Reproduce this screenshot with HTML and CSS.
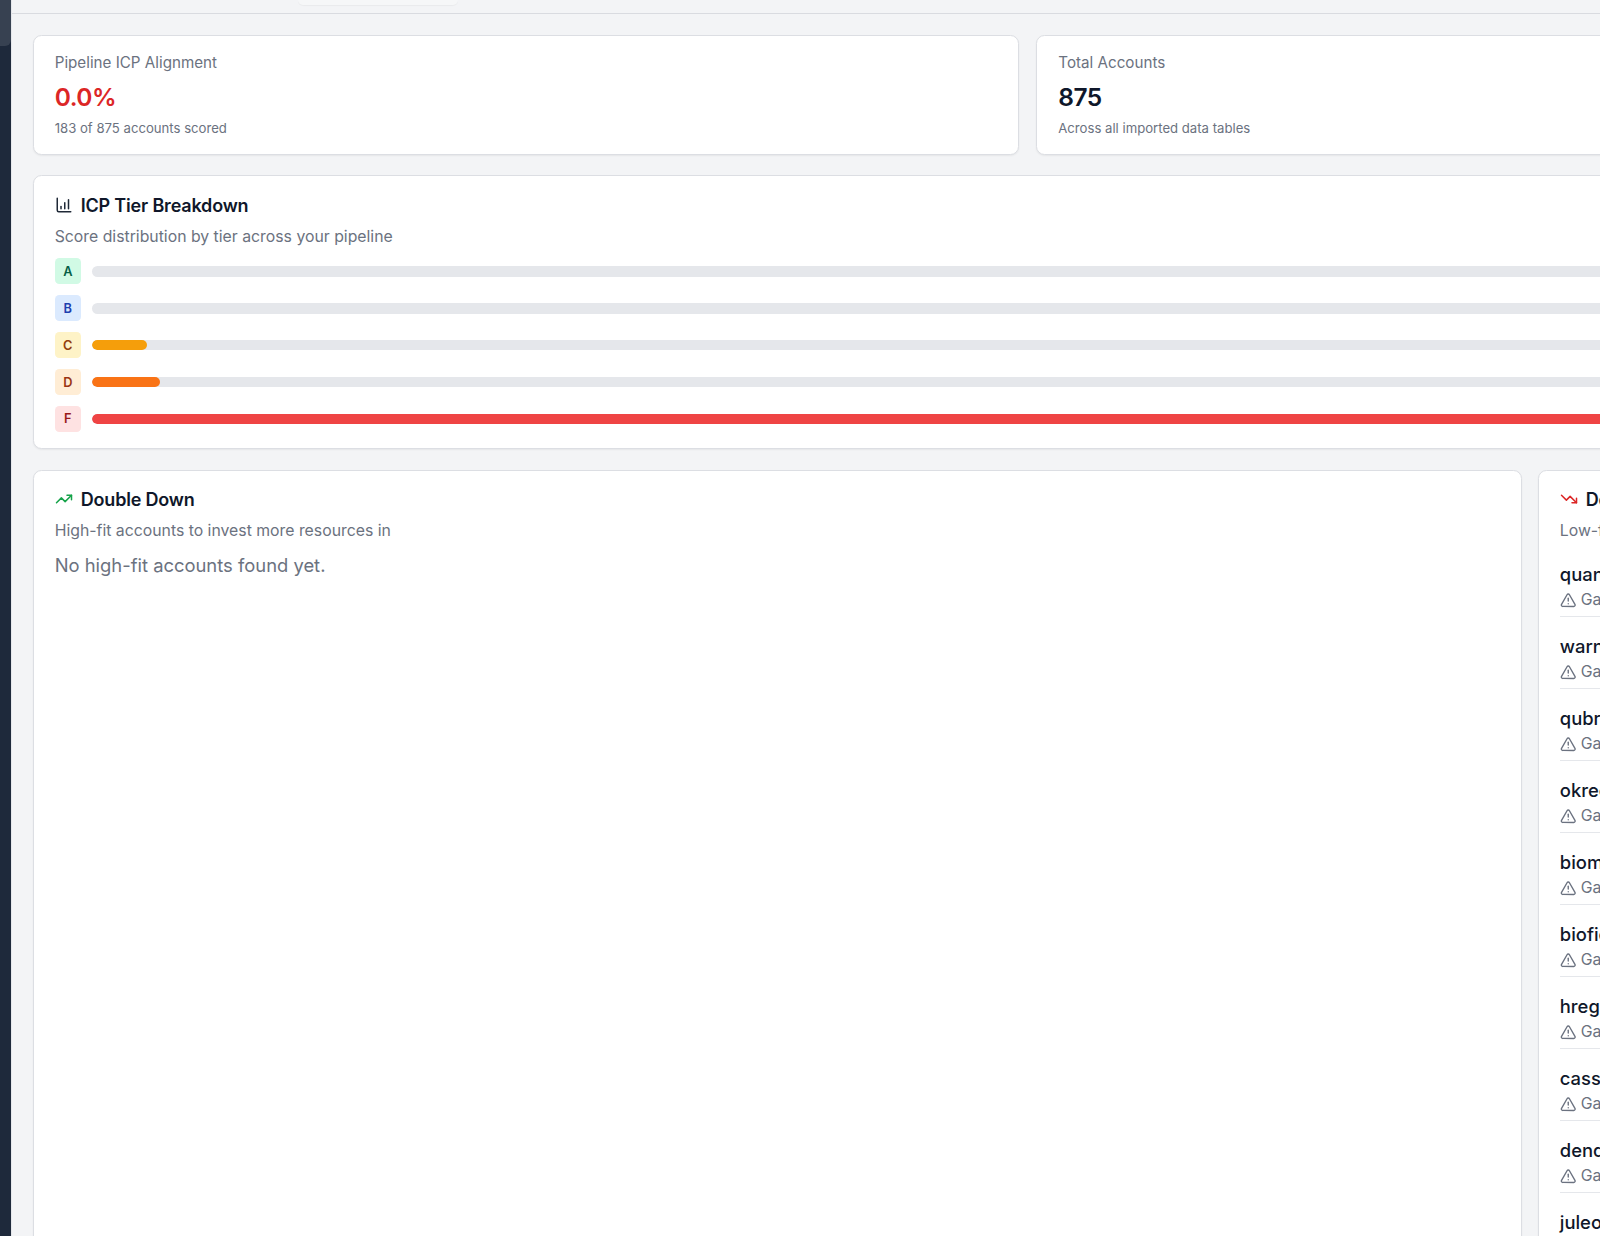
FILE: index.html
```html
<!DOCTYPE html>
<html lang="en">
<head>
    <meta charset="UTF-8">
    <meta name="viewport" content="width=device-width, initial-scale=1.0">
    <title>ICP Dashboard</title>
    <link rel="stylesheet" href="styles.css">
</head>
<body>
    <div class="app">
        <!-- Sidebar, mostly scrolled out of view -->
        <div class="sidebar">
            <div class="sidebar-item"></div>
        </div>

        <div class="main">
            <div class="topbar">
                <div class="topbar-tab"></div>
            </div>

            <div class="page">
                <!-- Stat cards -->
                <div class="stats">
                    <div class="card stat-card">
                        <div class="stat-label">Pipeline ICP Alignment</div>
                        <div class="stat-value red">0.0%</div>
                        <div class="stat-note">183 of 875 accounts scored</div>
                    </div>
                    <div class="card stat-card">
                        <div class="stat-label">Total Accounts</div>
                        <div class="stat-value">875</div>
                        <div class="stat-note">Across all imported data tables</div>
                    </div>
                </div>

                <!-- Tier breakdown -->
                <div class="card breakdown">
                    <div class="card-title">
                        <svg class="title-icon" viewBox="0 0 24 24" fill="none" stroke="#1f2937" stroke-width="2" stroke-linecap="round" stroke-linejoin="round"><path d="M3 3v16a2 2 0 0 0 2 2h16"/><path d="M8 17v-3"/><path d="M13 17V9"/><path d="M18 17V5"/></svg>
                        <span>ICP Tier Breakdown</span>
                    </div>
                    <div class="card-desc">Score distribution by tier across your pipeline</div>
                    <div class="tiers">
                        <div class="tier">
                            <div class="tier-badge tier-a">A</div>
                            <div class="bar"></div>
                        </div>
                        <div class="tier">
                            <div class="tier-badge tier-b">B</div>
                            <div class="bar"></div>
                        </div>
                        <div class="tier">
                            <div class="tier-badge tier-c">C</div>
                            <div class="bar"><div class="bar-fill fill-c" style="width: 55px"></div></div>
                        </div>
                        <div class="tier">
                            <div class="tier-badge tier-d">D</div>
                            <div class="bar"><div class="bar-fill fill-d" style="width: 68px"></div></div>
                        </div>
                        <div class="tier">
                            <div class="tier-badge tier-f">F</div>
                            <div class="bar"><div class="bar-fill fill-f" style="width: 100%"></div></div>
                        </div>
                    </div>
                </div>

                <!-- Recommendations -->
                <div class="columns">
                    <div class="card column">
                        <div class="card-title">
                            <svg class="title-icon" viewBox="0 0 24 24" fill="none" stroke="#16a34a" stroke-width="2" stroke-linecap="round" stroke-linejoin="round"><path d="M16 7h6v6"/><path d="m22 7-8.5 8.5-5-5L2 17"/></svg>
                            <span>Double Down</span>
                        </div>
                        <div class="card-desc">High-fit accounts to invest more resources in</div>
                        <div class="empty">No high-fit accounts found yet.</div>
                    </div>

                    <div class="card column">
                        <div class="card-title">
                            <svg class="title-icon" viewBox="0 0 24 24" fill="none" stroke="#dc2626" stroke-width="2" stroke-linecap="round" stroke-linejoin="round"><path d="M16 17h6v-6"/><path d="m22 17-8.5-8.5-5 5L2 7"/></svg>
                            <span>Deprioritize</span>
                        </div>
                        <div class="card-desc">Low-fit accounts to reconsider</div>
                        <div class="accounts">
                            <div class="account">
                                <div class="account-name">quantumbio.com</div>
                                <div class="account-gap"><svg class="warn-icon" viewBox="0 0 24 24" fill="none" stroke="#6b7280" stroke-width="2" stroke-linecap="round" stroke-linejoin="round"><path d="m21.73 18-8-14a2 2 0 0 0-3.48 0l-8 14A2 2 0 0 0 4 21h16a2 2 0 0 0 1.73-3"/><path d="M12 9v4"/><path d="M12 17h.01"/></svg><span>Gaps</span></div>
                            </div>
                            <div class="account">
                                <div class="account-name">warnerbio.com</div>
                                <div class="account-gap"><svg class="warn-icon" viewBox="0 0 24 24" fill="none" stroke="#6b7280" stroke-width="2" stroke-linecap="round" stroke-linejoin="round"><path d="m21.73 18-8-14a2 2 0 0 0-3.48 0l-8 14A2 2 0 0 0 4 21h16a2 2 0 0 0 1.73-3"/><path d="M12 9v4"/><path d="M12 17h.01"/></svg><span>Gaps</span></div>
                            </div>
                            <div class="account">
                                <div class="account-name">qubright.com</div>
                                <div class="account-gap"><svg class="warn-icon" viewBox="0 0 24 24" fill="none" stroke="#6b7280" stroke-width="2" stroke-linecap="round" stroke-linejoin="round"><path d="m21.73 18-8-14a2 2 0 0 0-3.48 0l-8 14A2 2 0 0 0 4 21h16a2 2 0 0 0 1.73-3"/><path d="M12 9v4"/><path d="M12 17h.01"/></svg><span>Gaps</span></div>
                            </div>
                            <div class="account">
                                <div class="account-name">okreo.com</div>
                                <div class="account-gap"><svg class="warn-icon" viewBox="0 0 24 24" fill="none" stroke="#6b7280" stroke-width="2" stroke-linecap="round" stroke-linejoin="round"><path d="m21.73 18-8-14a2 2 0 0 0-3.48 0l-8 14A2 2 0 0 0 4 21h16a2 2 0 0 0 1.73-3"/><path d="M12 9v4"/><path d="M12 17h.01"/></svg><span>Gaps</span></div>
                            </div>
                            <div class="account">
                                <div class="account-name">biomed.com</div>
                                <div class="account-gap"><svg class="warn-icon" viewBox="0 0 24 24" fill="none" stroke="#6b7280" stroke-width="2" stroke-linecap="round" stroke-linejoin="round"><path d="m21.73 18-8-14a2 2 0 0 0-3.48 0l-8 14A2 2 0 0 0 4 21h16a2 2 0 0 0 1.73-3"/><path d="M12 9v4"/><path d="M12 17h.01"/></svg><span>Gaps</span></div>
                            </div>
                            <div class="account">
                                <div class="account-name">biofield.com</div>
                                <div class="account-gap"><svg class="warn-icon" viewBox="0 0 24 24" fill="none" stroke="#6b7280" stroke-width="2" stroke-linecap="round" stroke-linejoin="round"><path d="m21.73 18-8-14a2 2 0 0 0-3.48 0l-8 14A2 2 0 0 0 4 21h16a2 2 0 0 0 1.73-3"/><path d="M12 9v4"/><path d="M12 17h.01"/></svg><span>Gaps</span></div>
                            </div>
                            <div class="account">
                                <div class="account-name">hregen.com</div>
                                <div class="account-gap"><svg class="warn-icon" viewBox="0 0 24 24" fill="none" stroke="#6b7280" stroke-width="2" stroke-linecap="round" stroke-linejoin="round"><path d="m21.73 18-8-14a2 2 0 0 0-3.48 0l-8 14A2 2 0 0 0 4 21h16a2 2 0 0 0 1.73-3"/><path d="M12 9v4"/><path d="M12 17h.01"/></svg><span>Gaps</span></div>
                            </div>
                            <div class="account">
                                <div class="account-name">cassava.com</div>
                                <div class="account-gap"><svg class="warn-icon" viewBox="0 0 24 24" fill="none" stroke="#6b7280" stroke-width="2" stroke-linecap="round" stroke-linejoin="round"><path d="m21.73 18-8-14a2 2 0 0 0-3.48 0l-8 14A2 2 0 0 0 4 21h16a2 2 0 0 0 1.73-3"/><path d="M12 9v4"/><path d="M12 17h.01"/></svg><span>Gaps</span></div>
                            </div>
                            <div class="account">
                                <div class="account-name">dendron.com</div>
                                <div class="account-gap"><svg class="warn-icon" viewBox="0 0 24 24" fill="none" stroke="#6b7280" stroke-width="2" stroke-linecap="round" stroke-linejoin="round"><path d="m21.73 18-8-14a2 2 0 0 0-3.48 0l-8 14A2 2 0 0 0 4 21h16a2 2 0 0 0 1.73-3"/><path d="M12 9v4"/><path d="M12 17h.01"/></svg><span>Gaps</span></div>
                            </div>
                            <div class="account">
                                <div class="account-name">juleo.com</div>
                            </div>
                        </div>
                    </div>
                </div>
            </div>
        </div>
    </div>
</body>
</html>
```

FILE: styles.css
```css
/* Global styling */
* {
    box-sizing: border-box;
}

html,
body {
    margin: 0;
    padding: 0;
    height: 100%;
    overflow: hidden;
}

body {
    font-family: Inter, "Liberation Sans", sans-serif;
    color: #0f172a;
    background: #f3f4f6;
}

.app {
    display: flex;
    width: 1600px;
    height: 1236px;
    overflow: hidden;
}

/* Sidebar */
.sidebar {
    flex: 0 0 12px;
    background: #1e293b;
    border-right: 1px solid #e5e7eb;
}

.sidebar-item {
    height: 46px;
    background: #374151;
    border-bottom-right-radius: 6px;
}

/* Main area */
.main {
    flex: 1;
    min-width: 0;
}

.topbar {
    height: 14px;
    border-bottom: 1px solid #d9dbe0;
    padding-left: 286px;
}

.topbar-tab {
    width: 160px;
    height: 5px;
    background: #f6f7f8;
    border-radius: 0 0 6px 6px;
    box-shadow: 0 1px 1px rgba(0, 0, 0, 0.04);
}

.page {
    display: flex;
    flex-direction: column;
    gap: 21px;
    width: 2100px;
    padding: 21.3px 20.7px;
}

/* Cards */
.card {
    background: #fff;
    border: 1px solid #dcdee3;
    border-radius: 8.5px;
    box-shadow: 0 1px 2px rgba(0, 0, 0, 0.06);
}

.stats {
    display: flex;
    gap: 17.1px;
    margin-bottom: -1px;
}

.stat-card {
    flex: 0 0 986.5px;
    height: 120px;
    padding: 16px 21px;
}

.stat-label {
    font-size: 15.2px;
    line-height: 21px;
    color: #6b7280;
}

.stat-value {
    margin-top: 6.5px;
    font-size: 24.5px;
    line-height: 34px;
    font-weight: 600;
    letter-spacing: -0.5px;
    color: #0f172a;
}

.stat-value.red {
    color: #dc2626;
}

.stat-note {
    margin-top: 5px;
    font-size: 13.15px;
    line-height: 18px;
    color: #6b7280;
}

/* Tier breakdown */
.breakdown {
    height: 273.6px;
    padding: 16.5px 21px;
}

.card-title {
    display: flex;
    align-items: center;
    gap: 8px;
    font-size: 18px;
    line-height: 25px;
    font-weight: 600;
    letter-spacing: -0.18px;
    color: #0f172a;
}

.title-icon {
    width: 18px;
    height: 18px;
    flex: none;
}

.card-desc {
    margin-top: 8.5px;
    font-size: 15.8px;
    line-height: 22px;
    color: #6b7280;
}

.tiers {
    display: flex;
    flex-direction: column;
    gap: 10.7px;
    margin-top: 10px;
}

.tier {
    display: flex;
    align-items: center;
    gap: 11px;
}

.tier-badge {
    flex: none;
    width: 26.2px;
    height: 26.2px;
    border-radius: 4.3px;
    display: flex;
    align-items: center;
    justify-content: center;
    font-size: 12.8px;
    font-weight: 600;
}

.tier-a { background: #d1fae5; color: #065f46; }
.tier-b { background: #dbeafe; color: #1e40af; }
.tier-c { background: #fef3c7; color: #92400e; }
.tier-d { background: #ffedd5; color: #9a3412; }
.tier-f { background: #fee2e2; color: #991b1b; }

.bar {
    flex: 1;
    height: 10.6px;
    background: #e5e7eb;
    border-radius: 6px;
    overflow: hidden;
}

.bar-fill {
    height: 100%;
    border-radius: 6px;
}

.fill-c { background: #f59e0b; }
.fill-d { background: #f97316; }
.fill-f { background: #ef4444; }

/* Double down / deprioritize */
.columns {
    display: flex;
    gap: 15.6px;
}

.column {
    flex: 0 0 1489.5px;
    height: 1000px;
    padding: 16px 21px;
}

.empty {
    margin-top: 10.5px;
    font-size: 18.4px;
    line-height: 25px;
    color: #6b7280;
}

.accounts {
    margin-top: 19.5px;
}

.account {
    height: 72px;
}

.account-name {
    font-size: 18.4px;
    line-height: 25px;
    font-weight: 500;
    color: #0f172a;
}

.account-gap {
    display: flex;
    align-items: center;
    gap: 4.5px;
    margin-top: 2px;
    padding-bottom: 5px;
    border-bottom: 1px solid #e5e7eb;
    font-size: 15.8px;
    line-height: 22px;
    color: #6b7280;
}

.warn-icon {
    width: 16.5px;
    height: 16.5px;
    flex: none;
}
```
